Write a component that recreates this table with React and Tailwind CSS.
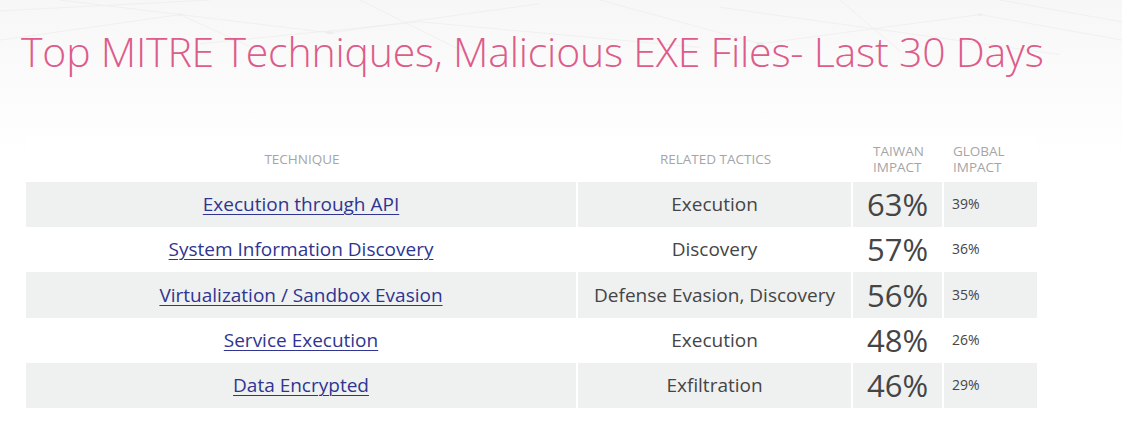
import React from 'react';

const rows = [
    { technique: "Execution through API", tactics: "Execution", taiwan: "63%", global: "39%", h: "h-[45px]" },
    { technique: "System Information Discovery", tactics: "Discovery", taiwan: "57%", global: "36%", h: "h-[45px]" },
    { technique: "Virtualization / Sandbox Evasion", tactics: "Defense Evasion, Discovery", taiwan: "56%", global: "35%", h: "h-[46px]" },
    { technique: "Service Execution", tactics: "Execution", taiwan: "48%", global: "26%", h: "h-[45px]" },
    { technique: "Data Encrypted", tactics: "Exfiltration", taiwan: "46%", global: "29%", h: "h-[45px]" },
];

// faint network lines in the page background
const Backdrop = () => (
    <svg className="absolute inset-0 w-full h-full" viewBox="0 0 1122 439" preserveAspectRatio="none">
        <g stroke="#ececec" strokeWidth="1" fill="none">
            <path d="M0 30 L210 0 M60 0 L330 90 L540 10 M200 120 L420 60 L700 130" />
            <path d="M600 0 L760 120 L980 40 L1122 110 M840 0 L900 140 M1000 0 L1122 60" />
            <path d="M0 110 L180 40 L260 140 M360 0 L470 150 M720 20 L1060 150" />
        </g>
        <g fill="#ededed">
            <circle cx="330" cy="90" r="4" />
            <circle cx="760" cy="120" r="4" />
            <circle cx="980" cy="40" r="3" />
            <circle cx="180" cy="40" r="3" />
        </g>
    </svg>
);

export default function App() {
    return (
        <div className="relative w-[1122px] h-[439px] overflow-hidden bg-white" style={{ fontFamily: '"Open Sans", "Liberation Sans", sans-serif' }}>
            <div className="absolute inset-x-0 top-0 h-[160px] bg-gradient-to-b from-[#f7f7f7] to-white">
                <Backdrop />
            </div>

            <div className="relative pt-[23px] pl-[21px]">
                <h1 className="text-[41px] leading-[56px] font-light text-[#dd5c8a] tracking-[-0.2px]">
                    Top MITRE Techniques, Malicious EXE Files- Last 30 Days
                </h1>

                <div className="mt-[57px] ml-[5px] w-[1011px] bg-white">
                    {/* --- Header --- */}
                    <div className="flex h-[46px] text-[13.5px] text-[#a5a5a5] uppercase leading-[16px]">
                        <div className="w-[552px] flex items-center justify-center">Technique</div>
                        <div className="w-[275px] flex items-center justify-center">Related Tactics</div>
                        <div className="w-[91px] flex items-center pl-[20px]">Taiwan<br />Impact</div>
                        <div className="w-[93px] flex items-center pl-[9px]">Global<br />Impact</div>
                    </div>

                    {/* --- Rows --- */}
                    {rows.map((row, i) => (
                        <div key={row.technique} className={`flex ${row.h} ${i % 2 === 0 ? 'bg-[#eff0f0]' : 'bg-white'}`}>
                            <div className="w-[552px] flex items-center justify-center border-r-2 border-white">
                                <a href="#" className="text-[19px] text-[#2f3590] underline underline-offset-[3px] decoration-1">{row.technique}</a>
                            </div>
                            <div className="w-[275px] flex items-center justify-center border-r-2 border-white text-[19px] text-[#454545]">
                                {row.tactics}
                            </div>
                            <div className="w-[91px] flex items-center justify-center border-r-2 border-white text-[31px] text-[#454545]">
                                {row.taiwan}
                            </div>
                            <div className="w-[93px] flex items-center pl-[8px] pb-[2px] text-[14px] text-[#454545]">
                                {row.global}
                            </div>
                        </div>
                    ))}
                </div>
            </div>
        </div>
    );
}
